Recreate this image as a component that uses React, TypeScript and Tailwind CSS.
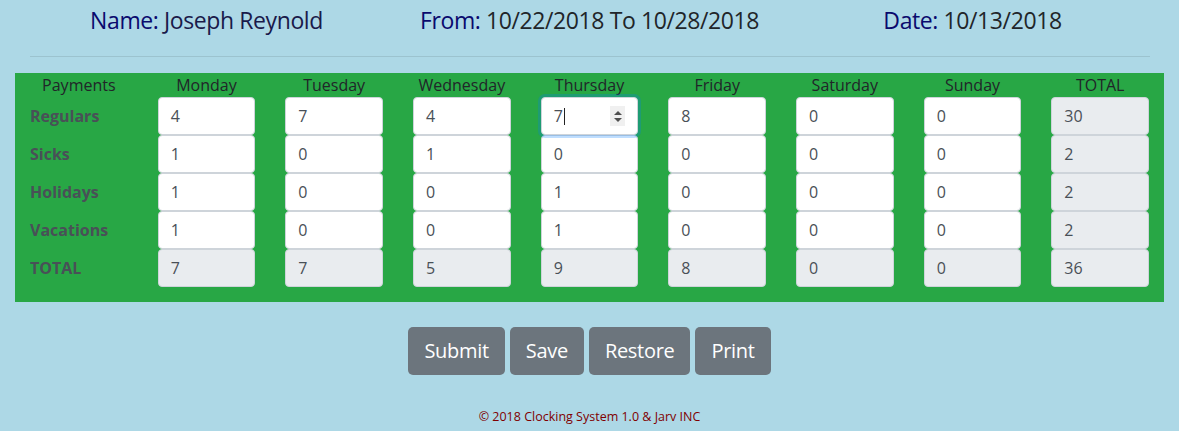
import { useState } from "react";

const DAYS = ["Monday", "Tuesday", "Wednesday", "Thursday", "Friday", "Saturday", "Sunday"];

const ROWS = [
  { name: "Regulars", values: [4, 7, 4, 7, 8, 0, 0] },
  { name: "Sicks", values: [1, 0, 1, 0, 0, 0, 0] },
  { name: "Holidays", values: [1, 0, 0, 1, 0, 0, 0] },
  { name: "Vacations", values: [1, 0, 0, 1, 0, 0, 0] },
];

function Cell({ value, readOnly, focused }: { value: number; readOnly?: boolean; focused?: boolean }) {
  return (
    <div className="px-[15px] h-[38px]">
      <div
        className={`relative h-[38px] rounded-[4px] border pl-3 flex items-center text-base text-[#495057] ${
          readOnly ? "bg-[#e9ecef] border-[#ced4da]" : "bg-white border-[#ced4da]"
        } ${focused ? "z-10 border-[#80bdff] shadow-[0_0_0_3px_rgba(0,123,255,0.25)]" : ""}`}
      >
        <span>{value}</span>
        {focused && (
          <>
            {/* caret */}
            <span className="ml-[1px] w-px h-[17px] bg-[#222]" />
            {/* number spinner */}
            <span className="absolute right-[12px] top-[8px] w-[15px] h-[20px] bg-[#f0f0f0] flex flex-col items-center justify-center gap-[3px]">
              <span className="w-0 h-0 border-l-[4px] border-r-[4px] border-b-[4px] border-l-transparent border-r-transparent border-b-[#505050]" />
              <span className="w-0 h-0 border-l-[4px] border-r-[4px] border-t-[4px] border-l-transparent border-r-transparent border-t-[#505050]" />
            </span>
          </>
        )}
      </div>
    </div>
  );
}

export default function App() {
  const [rows] = useState(ROWS);
  const dayTotals = DAYS.map((_, d) => rows.reduce((s, r) => s + r.values[d], 0));
  const rowTotals = rows.map((r) => r.values.reduce((s, v) => s + v, 0));
  const grand = rowTotals.reduce((s, v) => s + v, 0);

  return (
    <div className="min-h-[431px] bg-[#add8e6] font-['Open_Sans',sans-serif] text-[#212529]">
      {/* ── Header ── */}
      <div className="px-[15px] pt-[5px] grid grid-cols-3 text-center text-[23px] leading-[30px] font-medium tracking-[-0.4px]">
        <div>
          <span className="text-[#0a0a6e]">Name: </span>
          <span className="text-[#1a1a4a]">Joseph Reynold</span>
        </div>
        <div>
          <span className="text-[#0a0a6e]">From: </span>
          <span>10/22/2018 To 10/28/2018</span>
        </div>
        <div>
          <span className="text-[#0a0a6e]">Date: </span>
          <span>10/13/2018</span>
        </div>
      </div>

      <hr className="mt-[21px] ml-[30px] mr-[29px] border-0 border-t border-[#9cc3cf]" />

      {/* ── Timesheet ── */}
      <div className="mx-[15px] mt-[16px] bg-[#28a745] pb-[15px] grid grid-cols-9 text-base">
        <div className="h-[24px] leading-[24px] text-center">Payments</div>
        {DAYS.map((d) => (
          <div key={d} className="h-[24px] leading-[24px] text-center">
            {d}
          </div>
        ))}
        <div className="h-[24px] leading-[24px] text-center">TOTAL</div>

        {rows.map((r, i) => (
          <div key={r.name} className="contents">
            <div className="px-[15px] h-[38px] flex items-center font-bold text-[#495057]">{r.name}</div>
            {r.values.map((v, d) => (
              <Cell key={d} value={v} focused={i === 0 && d === 3} />
            ))}
            <Cell value={rowTotals[i]} readOnly />
          </div>
        ))}

        <div className="px-[15px] h-[38px] flex items-center font-bold text-[#495057]">TOTAL</div>
        {dayTotals.map((v, d) => (
          <Cell key={d} value={v} readOnly />
        ))}
        <Cell value={grand} readOnly />
      </div>

      {/* ── Actions ── */}
      <div className="mt-[25px] flex justify-center gap-[5px]">
        {["Submit", "Save", "Restore", "Print"].map((b) => (
          <button
            key={b}
            className="h-[48px] px-4 rounded-[5px] bg-[#6c757d] text-white text-[20px] tracking-[-0.3px]"
          >
            {b}
          </button>
        ))}
      </div>

      <div className="mt-[32px] text-center text-[12.5px] leading-[19px] text-[#800000]">
        © 2018 Clocking System 1.0 &amp; Jarv INC
      </div>
    </div>
  );
}
